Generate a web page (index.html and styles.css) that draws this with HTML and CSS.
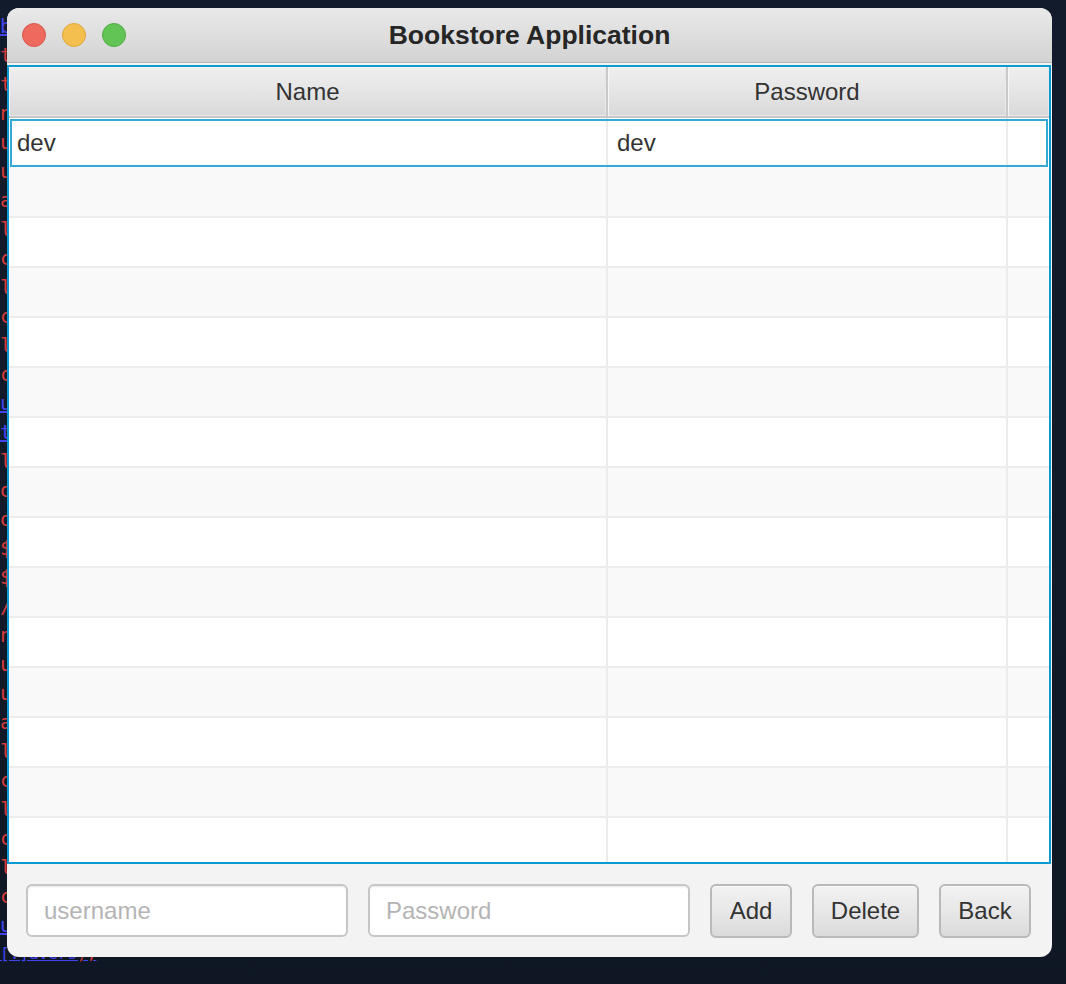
FILE: index.html
```html
<!DOCTYPE html>
<html>
<head>
<meta charset="utf-8">
<link rel="stylesheet" href="styles.css">
<title>Bookstore Application</title>
</head>
<body>
<div class="desktop">
  <div class="code-bg">
    <div class="ln blue">b</div>
    <div class="ln">t</div>
    <div class="ln">t</div>
    <div class="ln">n</div>
    <div class="ln">u</div>
    <div class="ln">u</div>
    <div class="ln">a</div>
    <div class="ln">l</div>
    <div class="ln">c</div>
    <div class="ln">l</div>
    <div class="ln">c</div>
    <div class="ln">l</div>
    <div class="ln">c</div>
    <div class="ln blue">u</div>
    <div class="ln blue">t</div>
    <div class="ln">l</div>
    <div class="ln">o</div>
    <div class="ln">o</div>
    <div class="ln">$</div>
    <div class="ln">$</div>
    <div class="ln">/</div>
    <div class="ln">n</div>
    <div class="ln">u</div>
    <div class="ln">u</div>
    <div class="ln">a</div>
    <div class="ln">l</div>
    <div class="ln">c</div>
    <div class="ln">l</div>
    <div class="ln">c</div>
    <div class="ln">l</div>
    <div class="ln">c</div>
    <div class="ln blue">u</div>
    <div class="ln last blue">[.]avers<span class="red">);</span></div>
  </div>

  <div class="window">
    <div class="titlebar">
      <div class="lights">
        <span class="light red-l"></span>
        <span class="light yellow-l"></span>
        <span class="light green-l"></span>
      </div>
      <div class="title">Bookstore Application</div>
    </div>

    <div class="table">
      <div class="thead">
        <div class="th col1"><span>Name</span></div>
        <div class="th col2"><span>Password</span></div>
        <div class="th col3"></div>
      </div>
      <div class="tbody">
        <div class="tr selected"><div class="td col1">dev</div><div class="td col2">dev</div><div class="td col3"></div></div>
        <div class="tr odd"><div class="td col1"></div><div class="td col2"></div><div class="td col3"></div></div>
        <div class="tr"><div class="td col1"></div><div class="td col2"></div><div class="td col3"></div></div>
        <div class="tr odd"><div class="td col1"></div><div class="td col2"></div><div class="td col3"></div></div>
        <div class="tr"><div class="td col1"></div><div class="td col2"></div><div class="td col3"></div></div>
        <div class="tr odd"><div class="td col1"></div><div class="td col2"></div><div class="td col3"></div></div>
        <div class="tr"><div class="td col1"></div><div class="td col2"></div><div class="td col3"></div></div>
        <div class="tr odd"><div class="td col1"></div><div class="td col2"></div><div class="td col3"></div></div>
        <div class="tr"><div class="td col1"></div><div class="td col2"></div><div class="td col3"></div></div>
        <div class="tr odd"><div class="td col1"></div><div class="td col2"></div><div class="td col3"></div></div>
        <div class="tr"><div class="td col1"></div><div class="td col2"></div><div class="td col3"></div></div>
        <div class="tr odd"><div class="td col1"></div><div class="td col2"></div><div class="td col3"></div></div>
        <div class="tr"><div class="td col1"></div><div class="td col2"></div><div class="td col3"></div></div>
        <div class="tr odd"><div class="td col1"></div><div class="td col2"></div><div class="td col3"></div></div>
        <div class="tr"><div class="td col1"></div><div class="td col2"></div><div class="td col3"></div></div>
      </div>
    </div>

    <div class="controls">
      <input class="field" type="text" placeholder="username">
      <input class="field" type="password" placeholder="Password">
      <button class="btn btn-add">Add</button>
      <button class="btn btn-delete">Delete</button>
      <button class="btn btn-back">Back</button>
    </div>
  </div>
</div>
</body>
</html>
```

FILE: styles.css
```css
* { box-sizing: border-box; }

html, body {
  margin: 0;
  padding: 0;
}

body {
  width: 1066px;
  height: 984px;
  overflow: hidden;
  background: #111a29;
  font-family: "Liberation Sans", Arial, sans-serif;
}

.desktop {
  position: relative;
  width: 1066px;
  height: 984px;
  overflow: hidden;
  background: linear-gradient(180deg, #121b2b 0%, #111a28 60%, #0f1725 100%);
}

/* code editor peeking from behind the window */
.code-bg {
  position: absolute;
  left: 0;
  top: 12px;
  width: 140px;
  font-family: "DejaVu Sans Mono", monospace;
  font-size: 20px;
  line-height: 29px;
  color: #d63b3b;
  white-space: nowrap;
}
.code-bg .ln { height: 29px; }
.code-bg .ln.last { font-size: 16px; line-height: 20px; height: 20px; margin-top: 4px; }
.code-bg .blue { color: #4444ee; text-decoration: underline; }
.code-bg .red { color: #d63b3b; text-decoration: none; }

.window {
  position: absolute;
  left: 7px;
  top: 8px;
  width: 1045px;
  height: 949px;
  border-radius: 12px;
  overflow: hidden;
  background: #f3f3f3;
  display: flex;
  flex-direction: column;
}

.titlebar {
  position: relative;
  flex: 0 0 55px;
  height: 55px;
  background: linear-gradient(180deg, #e9e9e9 0%, #dedede 50%, #d3d3d3 100%);
  border-bottom: 1px solid #b6b6b6;
  display: flex;
  align-items: center;
  justify-content: center;
}

.lights {
  position: absolute;
  left: 15px;
  top: 15px;
  display: flex;
  gap: 16px;
}

.light {
  width: 24px;
  height: 24px;
  border-radius: 50%;
  display: block;
}
.red-l { background: #ee6a5f; border: 1px solid #d9574c; }
.yellow-l { background: #f5bf4f; border: 1px solid #dea83e; }
.green-l { background: #61c454; border: 1px solid #4fad43; }

.title {
  font-weight: bold;
  font-size: 26.5px;
  color: #262626;
  margin-top: 1px;
}

.table {
  margin-top: 2px;
  margin-right: 1px;
  flex: 0 0 799px;
  height: 799px;
  border: 2px solid #0b9bd0;
  background: #ffffff;
  display: flex;
  flex-direction: column;
  overflow: hidden;
}

.thead {
  flex: 0 0 51px;
  display: flex;
  border-bottom: 2px solid #c6c6c6;
}

.th {
  height: 49px;
  background: linear-gradient(180deg, #efefef 0%, #e4e4e4 55%, #d9d9d9 100%);
  box-shadow: inset 1px 1px 0 #f7f7f7, inset -1px -1px 0 #e8e8e8;
  display: flex;
  align-items: center;
  justify-content: center;
  font-size: 24px;
  color: #333333;
}

.col1 { flex: 0 0 599px; border-right: 2px solid #c9c9c9; }
.col2 { flex: 0 0 400px; border-right: 2px solid #c9c9c9; }
.col3 { flex: 1 1 auto; }

.tbody {
  flex: 1 1 auto;
  overflow: hidden;
}

.tr {
  height: 50px;
  display: flex;
  background: #ffffff;
  border-bottom: 2px solid #ededed;
}
.tr.odd { background: #f9f9f9; }

.tr.selected {
  outline: 2px solid #35a9d6;
  outline-offset: -3px;
  border-bottom: none;
}

.td {
  height: 100%;
  display: flex;
  align-items: center;
  font-size: 24px;
  color: #333333;
  padding-left: 8px;
}
.td.col1 { border-right: 2px solid #ececec; }
.td.col2 { border-right: 2px solid #ececec; padding-left: 9px; }

.controls {
  flex: 1 1 auto;
  display: flex;
  align-items: flex-start;
  gap: 20px;
  padding: 20px 20px 0 19px;
}

.field {
  width: 322px;
  height: 53px;
  border: 2px solid #c6c6c6;
  border-radius: 6px;
  background: #ffffff;
  box-shadow: inset 0 2px 2px -1px #e6e6e6;
  font-family: "Liberation Sans", Arial, sans-serif;
  font-size: 24px;
  color: #333333;
  padding: 0 0 0 16px;
  outline: none;
}
.field::placeholder { color: #b4b4b4; }

.btn {
  height: 54px;
  border: 2px solid #b9b9b9;
  border-radius: 6px;
  background: linear-gradient(180deg, #f2f2f2 0%, #e6e6e6 55%, #dbdbdb 100%);
  box-shadow: inset 0 1px 0 #fafafa;
  font-family: "Liberation Sans", Arial, sans-serif;
  font-size: 24px;
  color: #333333;
  padding: 0;
  cursor: pointer;
}
.btn-add { width: 82px; }
.btn-delete { width: 107px; }
.btn-back { width: 92px; }
```
